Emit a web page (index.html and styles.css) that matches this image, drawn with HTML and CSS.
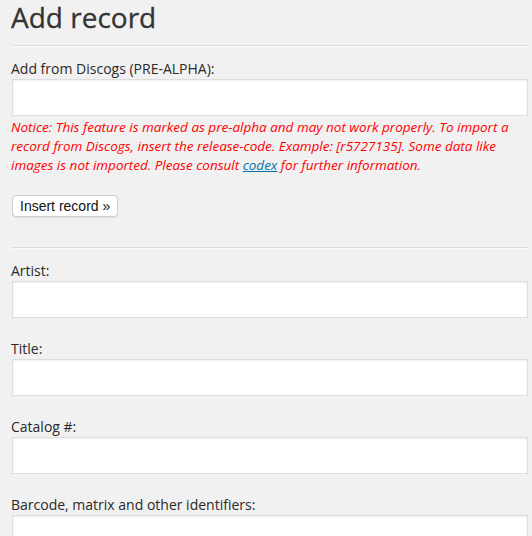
FILE: index.html
```html
<!DOCTYPE html>
<html>
<head>
<meta charset="utf-8">
<link rel="stylesheet" href="styles.css">
</head>
<body>
<div class="wrap">
  <h1 class="title">Add record</h1>
  <hr class="sep">
  <div class="discogs">
    <label class="label" for="discogs">Add from Discogs (PRE-ALPHA):</label>
    <input class="text" id="discogs" type="text">
    <p class="notice">Notice: This feature is marked as pre-alpha and may not work properly. To import a record from Discogs, insert the release-code. Example: [r5727135]. Some data like images is not imported. Please consult <a class="link" href="#">codex</a> for further information.</p>
    <button class="btn" type="button">Insert record »</button>
  </div>
  <hr class="sep sep-second">
  <div class="fields">
    <div class="field">
      <label class="label" for="artist">Artist:</label>
      <input class="text" id="artist" type="text">
    </div>
    <div class="field">
      <label class="label" for="title">Title:</label>
      <input class="text" id="title" type="text">
    </div>
    <div class="field">
      <label class="label" for="catalog">Catalog #:</label>
      <input class="text" id="catalog" type="text">
    </div>
    <div class="field">
      <label class="label" for="barcode">Barcode, matrix and other identifiers:</label>
      <input class="text" id="barcode" type="text">
    </div>
  </div>
</div>
</body>
</html>
```
FILE: styles.css
```css
html, body {
  margin: 0;
  padding: 0;
  background: #f1f1f1;
}
body {
  font-family: "Open Sans", "Liberation Sans", sans-serif;
  font-size: 14px;
  color: #333;
  overflow: hidden;
}
.wrap {
  padding: 0 3px 0 11px;
}
.title {
  margin: 0 0 10px;
  font-size: 28px;
  line-height: 35px;
  font-weight: 400;
  color: #333;
  -webkit-text-stroke: 0.3px #333;
}
.sep {
  margin: 0;
  height: 0;
  border: 0;
  border-top: 1px solid #dcdcdc;
  border-bottom: 1px solid #fafafa;
}
.discogs {
  padding-top: 12px;
}
.label {
  display: block;
  line-height: 20px;
  color: #2a2a2a;
}
.text {
  display: block;
  box-sizing: border-box;
  margin: 0 1px;
  width: calc(100% - 2px);
  height: 37px;
  border: 1px solid #ddd;
  background: #fff;
  box-shadow: inset 0 1px 2px rgba(0, 0, 0, 0.07);
  border-radius: 0;
  padding: 0 6px;
  font-family: inherit;
  font-size: 14px;
}
.notice {
  margin: 2px 0 0;
  font-style: italic;
  font-size: 13.5px;
  line-height: 19px;
  color: #f00;
}
.link {
  color: #0073aa;
  text-decoration: underline;
}
.btn {
  display: block;
  margin: 20px 0 0 1px;
  height: 22px;
  box-sizing: border-box;
  padding: 0 7px;
  border: 1px solid #cfcfcf;
  border-radius: 4px;
  background: #fff;
  box-shadow: 0 1px 1px rgba(0, 0, 0, 0.08);
  font-family: "Liberation Sans", Arial, sans-serif;
  font-size: 14px;
  line-height: 20px;
  color: #111;
}
.sep-second {
  margin-top: 30px;
}
.fields {
  display: flex;
  flex-direction: column;
  gap: 21px;
  padding-top: 12px;
}
```
